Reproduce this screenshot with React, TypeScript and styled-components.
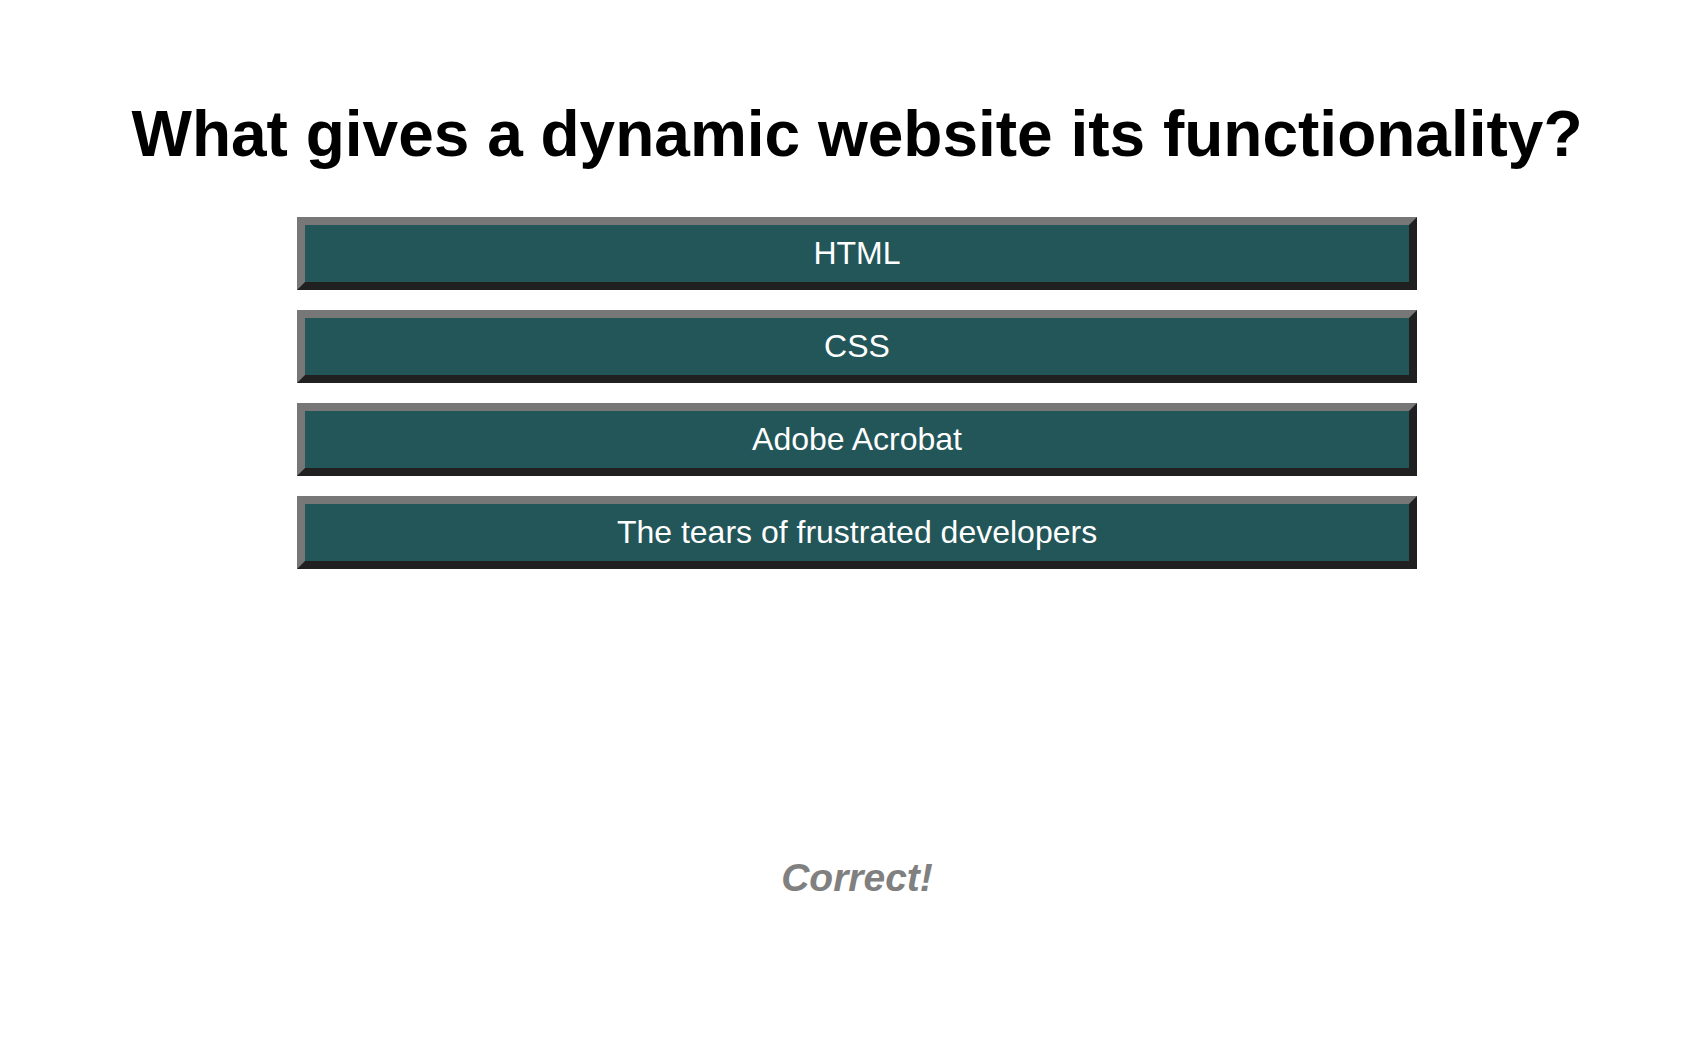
import React, { useState } from 'react';
import styled, { createGlobalStyle } from 'styled-components';

const GlobalStyle = createGlobalStyle`
  html, body {
    margin: 0;
    padding: 0;
    background: #ffffff;
    font-family: "Liberation Sans", Arial, sans-serif;
  }
`;

const answers = ['HTML', 'CSS', 'Adobe Acrobat', 'The tears of frustrated developers'];

const App: React.FC = () => {
  const [picked, setPicked] = useState<number | null>(null);

  return (
    <>
      <GlobalStyle />
      <Page>
        <Question>What gives a dynamic website its functionality?</Question>
        <AnswerList>
          {answers.map((a, i) => (
            <AnswerButton key={a} onClick={() => setPicked(i)}>
              {a}
            </AnswerButton>
          ))}
        </AnswerList>
        <Feedback>{picked === null || picked === 3 ? 'Correct!' : 'Try again!'}</Feedback>
      </Page>
    </>
  );
};

export default App;

// Styles
const Page = styled.div`
  display: flex;
  flex-direction: column;
  align-items: center;
  padding: 0 0 0 16px;
  min-height: 1038px;
  box-sizing: border-box;
`;

const Question = styled.h1`
  margin: 97px 0 0;
  font-size: 64px;
  font-weight: 700;
  line-height: 74px;
  color: #000;
  text-align: center;
`;

const AnswerList = styled.div`
  display: flex;
  flex-direction: column;
  gap: 20px;
  margin-top: 46px;
  width: 1120px;
`;

const AnswerButton = styled.button`
  height: 73px;
  width: 100%;
  box-sizing: border-box;
  border: 8px solid;
  border-color: #777777 #202020 #202020 #777777;
  background: #235659;
  color: #ffffff;
  font-family: "Liberation Sans", Arial, sans-serif;
  font-size: 32px;
  cursor: pointer;
  padding: 0;
`;

const Feedback = styled.p`
  margin: 287px 0 0;
  font-size: 39px;
  font-weight: 700;
  font-style: italic;
  color: #808080;
`;
